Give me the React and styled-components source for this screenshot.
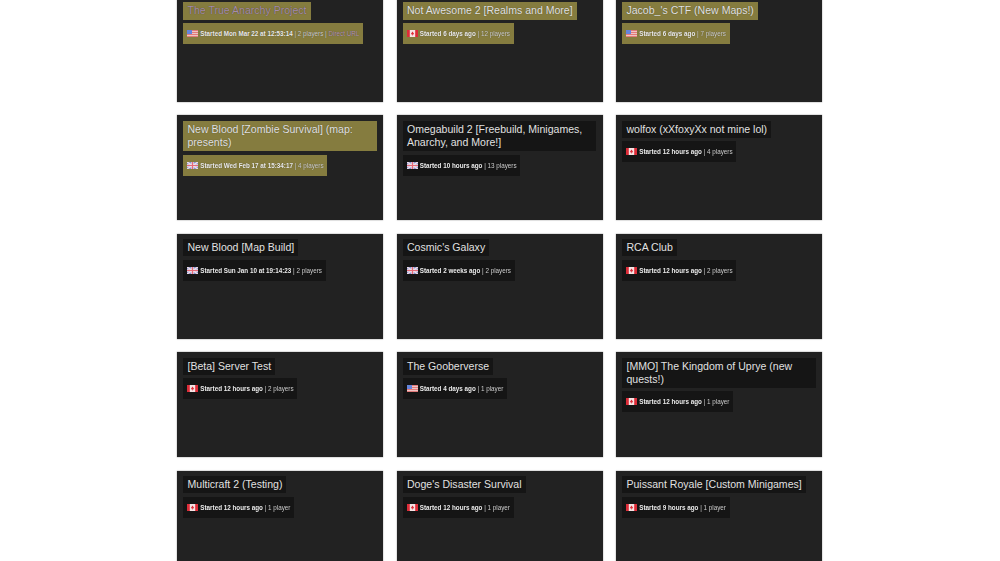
import styled, { createGlobalStyle } from "styled-components";

const GlobalStyle = createGlobalStyle`
  html, body {
    margin: 0;
    padding: 0;
    height: 100%;
    overflow: hidden;
    background: #fff;
    font-family: "Liberation Sans", Arial, sans-serif;
  }
`;

const ServerGrid = styled.div`
  display: grid;
  grid-template-columns: repeat(3, 206.2px);
  grid-auto-rows: 105px;
  column-gap: 13.3px;
  row-gap: 13.45px;
  width: 646px;
  margin: -3.1px 0 0 177.1px;
  filter: blur(0.45px);
`;

const Card = styled.div`
  box-sizing: border-box;
  background: #222;
  box-shadow: 0 0 1px 0.2px #999;
  padding: 5.5px 6.4px;
  display: flex;
  flex-direction: column;
  align-items: flex-start;
  gap: 3.3px;
  overflow: hidden;
`;

const Title = styled.div`
  width: fit-content;
  box-sizing: border-box;
  padding: 2px 4px;
  font-size: 10.55px;
  line-height: 13.2px;
  color: ${(p) => (p.$link ? "#a58bab" : "#e2e2e2")};
  background: ${(p) => (p.$featured ? "#857c3f" : "#151515")};
  text-shadow: 0 0 1px rgba(0, 0, 0, 0.45);
`;

const Meta = styled.div`
  display: flex;
  align-items: center;
  height: 21px;
  padding: 0 3.8px;
  font-size: 6.3px;
  color: #cdcdcd;
  white-space: pre;
  background: ${(p) => (p.$featured ? "#857c3f" : "#151515")};
  text-shadow: 0 0 1px rgba(0, 0, 0, 0.45);
`;

const Started = styled.b`
  color: #ebebeb;
  margin-left: 2px;
`;

const Direct = styled.span`
  color: #b394b8;
`;

const FlagSvg = styled.svg`
  width: 11px;
  height: 7px;
  flex: none;
`;

function Flag({ code }) {
  if (code === "us") {
    return (
      <FlagSvg viewBox="0 0 11 7" preserveAspectRatio="none">
        <rect width="11" height="7" fill="#eec4c4" />
        <rect y="0" width="11" height="1" fill="#e27a7a" />
        <rect y="2" width="11" height="1" fill="#e27a7a" />
        <rect y="4" width="11" height="1" fill="#e27a7a" />
        <rect y="6" width="11" height="1" fill="#e27a7a" />
        <rect width="5" height="4" fill="#6484dc" />
      </FlagSvg>
    );
  }
  if (code === "ca") {
    return (
      <FlagSvg viewBox="0 0 11 7" preserveAspectRatio="none">
        <rect width="11" height="7" fill="#f6e4e4" />
        <rect width="2.8" height="7" fill="#dc2c38" />
        <rect x="8.2" width="2.8" height="7" fill="#dc2c38" />
        <path d="M5.5 1.5 L6.5 3 L7 3 L6.5 4.5 L5.8 4.5 L5.8 5.5 L5.2 5.5 L5.2 4.5 L4.5 4.5 L4 3 L4.5 3 Z" fill="#dc2c38" />
      </FlagSvg>
    );
  }
  return (
    <FlagSvg viewBox="0 0 11 7" preserveAspectRatio="none">
      <rect width="11" height="7" fill="#8492d4" />
      <path d="M0 0 L11 7 M11 0 L0 7" stroke="#f2dfe6" strokeWidth="1.4" />
      <path d="M5.5 0 V7 M0 3.5 H11" stroke="#f2dfe6" strokeWidth="2.4" />
      <path d="M5.5 0 V7 M0 3.5 H11" stroke="#e46a78" strokeWidth="1.2" />
    </FlagSvg>
  );
}

const servers = [
  { title: "The True Anarchy Project", flag: "us", started: "Started Mon Mar 22 at 12:53:14", players: "2 players", featured: true, link: true, direct: true },
  { title: "Not Awesome 2 [Realms and More]", flag: "ca", started: "Started 6 days ago", players: "12 players", featured: true },
  { title: "Jacob_'s CTF (New Maps!)", flag: "us", started: "Started 6 days ago", players: "7 players", featured: true },
  { title: "New Blood [Zombie Survival] (map: presents)", flag: "gb", started: "Started Wed Feb 17 at 15:34:17", players: "4 players", featured: true },
  { title: "Omegabuild 2 [Freebuild, Minigames, Anarchy, and More!]", flag: "gb", started: "Started 10 hours ago", players: "13 players" },
  { title: "wolfox (xXfoxyXx not mine lol)", flag: "ca", started: "Started 12 hours ago", players: "4 players" },
  { title: "New Blood [Map Build]", flag: "gb", started: "Started Sun Jan 10 at 19:14:23", players: "2 players" },
  { title: "Cosmic's Galaxy", flag: "gb", started: "Started 2 weeks ago", players: "2 players" },
  { title: "RCA Club", flag: "ca", started: "Started 12 hours ago", players: "2 players" },
  { title: "[Beta] Server Test", flag: "ca", started: "Started 12 hours ago", players: "2 players" },
  { title: "The Gooberverse", flag: "us", started: "Started 4 days ago", players: "1 player" },
  { title: "[MMO] The Kingdom of Uprye (new quests!)", flag: "ca", started: "Started 12 hours ago", players: "1 player" },
  { title: "Multicraft 2 (Testing)", flag: "ca", started: "Started 12 hours ago", players: "1 player" },
  { title: "Doge's Disaster Survival", flag: "ca", started: "Started 12 hours ago", players: "1 player" },
  { title: "Puissant Royale [Custom Minigames]", flag: "ca", started: "Started 9 hours ago", players: "1 player" },
];

export default function App() {
  return (
    <>
      <GlobalStyle />
      <ServerGrid>
        {servers.map((s) => (
          <Card key={s.title}>
            <Title $featured={s.featured} $link={s.link}>{s.title}</Title>
            <Meta $featured={s.featured}>
              <Flag code={s.flag} />
              <Started>{s.started}</Started>
              {` | ${s.players}`}
              {s.direct && " | "}
              {s.direct && <Direct>Direct URL</Direct>}
            </Meta>
          </Card>
        ))}
      </ServerGrid>
    </>
  );
}
